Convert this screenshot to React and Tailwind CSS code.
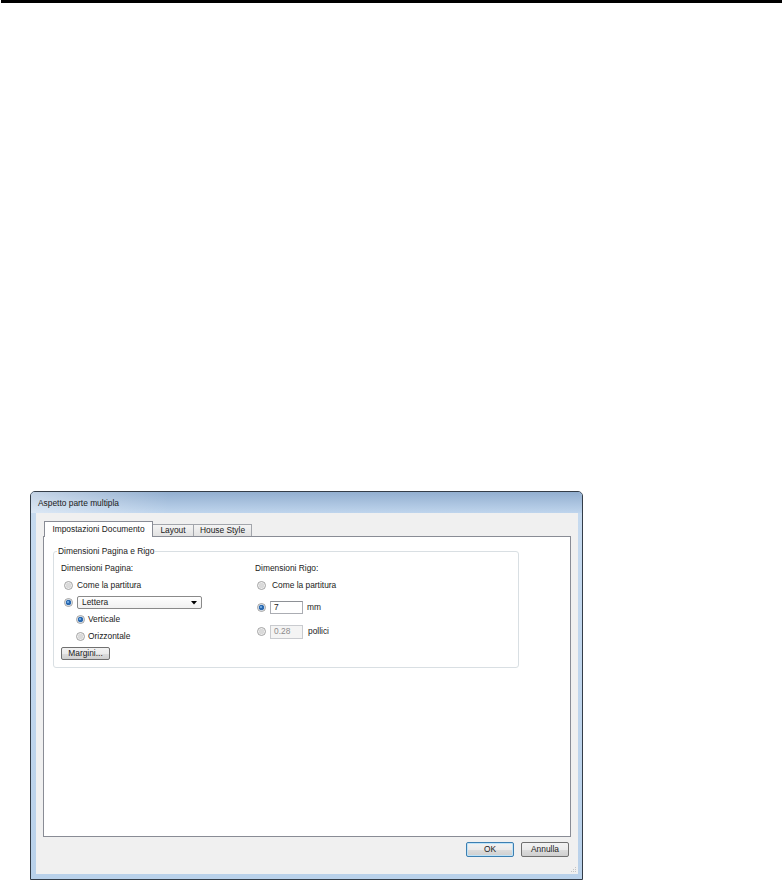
import React from "react";

function Radio({ checked }) {
  return (
    <svg width="9" height="9" viewBox="0 0 9 9" className="shrink-0 block">
      <circle cx="4.5" cy="4.5" r="4" fill="#f3f3f3" stroke="#9b9b9b" strokeWidth="0.9" />
      {checked ? (
        <>
          <circle cx="4.5" cy="4.5" r="2.7" fill="#2a69b0" />
          <circle cx="4" cy="4" r="1.1" fill="#7fb6ea" />
        </>
      ) : (
        <circle cx="4.5" cy="4.5" r="2.7" fill="#dadada" />
      )}
    </svg>
  );
}

function Btn({ children, def, className = "" }) {
  return (
    <div
      className={
        "flex items-center justify-center rounded-[2px] border bg-[linear-gradient(to_bottom,#f2f2f2_0%,#ebebeb_50%,#dddddd_51%,#cfcfcf_100%)] " +
        (def ? "border-[#3c7fb1] shadow-[inset_0_0_0_1px_#bfe3f8] " : "border-[#707070] ") +
        className
      }
    >
      {children}
    </div>
  );
}

export default function App() {
  return (
    <div className="w-[783px] h-[881px] bg-white overflow-hidden font-['Liberation_Sans',Arial,sans-serif] text-[8.4px] leading-[11px] text-[#1a1a1a]">
      <div className="ml-[1px] w-[781px] h-[3px] bg-black" />
      <div className="ml-[30px] mt-[488px] w-[553px] h-[389px] border border-[#343d48] rounded-t-[5px] flex flex-col bg-[#bcd4ec] overflow-hidden">
        {/* title bar */}
        <div className="h-[21px] shrink-0 pl-[7px] pt-[6px] bg-[linear-gradient(to_right,rgba(255,255,255,0.45),rgba(255,255,255,0)_25%),linear-gradient(to_bottom,#93afd0,#bfd5ed)]">
          Aspetto parte multipla
        </div>
        <div className="flex-1 flex">
          <div className="w-[5px] bg-[linear-gradient(to_bottom,#c6daef,#b9d1ea)]" />
          <div className="flex-1 bg-[#f0f0f0] flex flex-col px-[7px] pt-[8px] relative">
            {/* tabs */}
            <div className="flex items-end h-[15px] pl-[1px]">
              <div className="h-[16px] w-[109px] -mb-[1px] relative z-10 bg-white border border-b-0 border-[#898c95] flex justify-center pt-[2px]">
                Impostazioni Documento
              </div>
              <div className="h-[12px] w-[41px] border border-b-0 border-l-0 border-[#a2a5ab] bg-[linear-gradient(to_bottom,#f4f4f4,#e2e2e2)] flex justify-center">
                Layout
              </div>
              <div className="h-[12px] w-[58px] border border-b-0 border-l-0 border-[#a2a5ab] bg-[linear-gradient(to_bottom,#f4f4f4,#e2e2e2)] flex justify-center">
                House Style
              </div>
            </div>
            {/* panel */}
            <div className="h-[301px] border border-[#898c95] bg-white">
              <div className="mt-[14px] ml-[9px] w-[466px] h-[117px] border border-[#d9dfe3] rounded-[3px] relative pt-[8px] pl-[7px]">
                <div className="absolute left-[3px] -top-[6px] bg-white px-[1px]">
                  Dimensioni Pagina e Rigo
                </div>
                <div className="flex">
                  <div className="w-[194px] flex flex-col">
                    <div className="h-[17px] flex items-center">Dimensioni Pagina:</div>
                    <div className="h-[17px] flex items-center">
                      <div className="ml-[3px]"><Radio /></div>
                      <span className="ml-[4px]">Come la partitura</span>
                    </div>
                    <div className="h-[17px] flex items-center">
                      <div className="ml-[3px]"><Radio checked /></div>
                      <div className="ml-[4px] w-[125px] h-[13px] border border-[#8a8a8a] rounded-[2px] bg-[linear-gradient(to_bottom,#ffffff,#f1f1f1)] flex items-center justify-between pl-[4px] pr-[4px]">
                        <span>Lettera</span>
                        <svg width="6" height="4" viewBox="0 0 6 4" className="block">
                          <path d="M0 0 H6 L3 3.5 Z" fill="#000" />
                        </svg>
                      </div>
                    </div>
                    <div className="h-[17px] flex items-center">
                      <div className="ml-[15px]"><Radio checked /></div>
                      <span className="ml-[3px]">Verticale</span>
                    </div>
                    <div className="h-[17px] flex items-center">
                      <div className="ml-[15px]"><Radio /></div>
                      <span className="ml-[3px]">Orizzontale</span>
                    </div>
                    <Btn className="mt-[2px] w-[49px] h-[13px]">Margini...</Btn>
                  </div>
                  <div className="flex flex-col">
                    <div className="h-[17px] flex items-center">Dimensioni Rigo:</div>
                    <div className="h-[17px] flex items-center">
                      <div className="ml-[2px]"><Radio /></div>
                      <span className="ml-[6px]">Come la partitura</span>
                    </div>
                    <div className="mt-[5px] h-[17px] flex items-center">
                      <div className="ml-[2px]"><Radio checked /></div>
                      <div className="ml-[4px] w-[33px] h-[13px] border border-[#abadb3] border-t-[#8e9196] bg-white pl-[3px] flex items-center">
                        7
                      </div>
                      <span className="ml-[4px]">mm</span>
                    </div>
                    <div className="mt-[7px] h-[17px] flex items-center">
                      <div className="ml-[2px]"><Radio /></div>
                      <div className="ml-[4px] w-[33px] h-[14px] border border-[#c9cbcf] bg-[#f4f4f4] text-[#8b8b8b] pl-[3px] flex items-center">
                        0.28
                      </div>
                      <span className="ml-[5px]">pollici</span>
                    </div>
                  </div>
                </div>
              </div>
            </div>
            {/* buttons */}
            <div className="mt-[5px] flex justify-end gap-[7px] pr-[2px]">
              <Btn def className="w-[48px] h-[15px]">OK</Btn>
              <Btn className="w-[48px] h-[15px]">Annulla</Btn>
            </div>
            <svg width="6" height="6" viewBox="0 0 6 6" className="absolute right-[1px] bottom-[1px] block">
              <rect x="4" y="0" width="1" height="1" fill="#c4c4c4" />
              <rect x="2" y="2" width="1" height="1" fill="#c4c4c4" />
              <rect x="4" y="2" width="1" height="1" fill="#c4c4c4" />
              <rect x="0" y="4" width="1" height="1" fill="#c4c4c4" />
              <rect x="2" y="4" width="1" height="1" fill="#c4c4c4" />
              <rect x="4" y="4" width="1" height="1" fill="#c4c4c4" />
            </svg>
          </div>
          <div className="w-[4px] bg-[linear-gradient(to_bottom,#c6daef,#b9d1ea)]" />
        </div>
        <div className="h-[5px] shrink-0 bg-[#b9d1ea]" />
      </div>
    </div>
  );
}
